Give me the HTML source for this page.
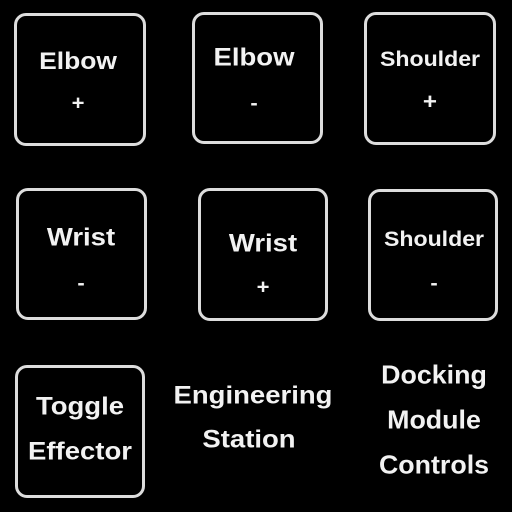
<html><head><style>
body{margin:0;width:512px;height:512px;background:#000;position:relative;overflow:hidden;font-family:"Liberation Sans",sans-serif;font-weight:bold;color:#fff}
.b{position:absolute;border:3px solid #ddd;border-radius:12px;box-sizing:border-box}
.t{position:absolute;transform:translate(-50%,-50%) scaleX(1.1);white-space:nowrap;color:#f2f2f2}
.d{transform:translate(-50%,-50%) scaleX(1.03)}
</style></head><body>
<div class="b" style="left:14px;top:13px;width:132px;height:133px"></div>
<div class="b" style="left:192px;top:12px;width:131px;height:132px"></div>
<div class="b" style="left:364px;top:12px;width:132px;height:133px"></div>
<div class="b" style="left:16px;top:188px;width:131px;height:132px"></div>
<div class="b" style="left:198px;top:188px;width:130px;height:133px"></div>
<div class="b" style="left:368px;top:189px;width:130px;height:132px"></div>
<div class="b" style="left:15px;top:365px;width:130px;height:133px"></div>
<div class="t" style="left:78px;top:62px;font-size:24px">Elbow</div>
<div class="t" style="left:78px;top:104px;font-size:20px">+</div>
<div class="t" style="left:254px;top:58px;font-size:25px">Elbow</div>
<div class="t" style="left:254px;top:104px;font-size:20px">-</div>
<div class="t" style="left:430px;top:60px;font-size:21px">Shoulder</div>
<div class="t" style="left:430px;top:102px;font-size:22px">+</div>
<div class="t" style="left:81px;top:238px;font-size:25px">Wrist</div>
<div class="t" style="left:81px;top:284px;font-size:20px">-</div>
<div class="t" style="left:263px;top:244px;font-size:25px">Wrist</div>
<div class="t" style="left:263px;top:288px;font-size:20px">+</div>
<div class="t" style="left:434px;top:240px;font-size:21px">Shoulder</div>
<div class="t" style="left:434px;top:284px;font-size:20px">-</div>
<div class="t" style="left:80px;top:407px;font-size:25px">Toggle</div>
<div class="t" style="left:80px;top:452px;font-size:25px">Effector</div>
<div class="t" style="left:253px;top:396px;font-size:25px">Engineering</div>
<div class="t" style="left:249px;top:440px;font-size:25px">Station</div>
<div class="t d" style="left:434px;top:375px;font-size:26px">Docking</div>
<div class="t d" style="left:434px;top:420px;font-size:26px">Module</div>
<div class="t d" style="left:434px;top:465px;font-size:26px">Controls</div>
</body></html>
